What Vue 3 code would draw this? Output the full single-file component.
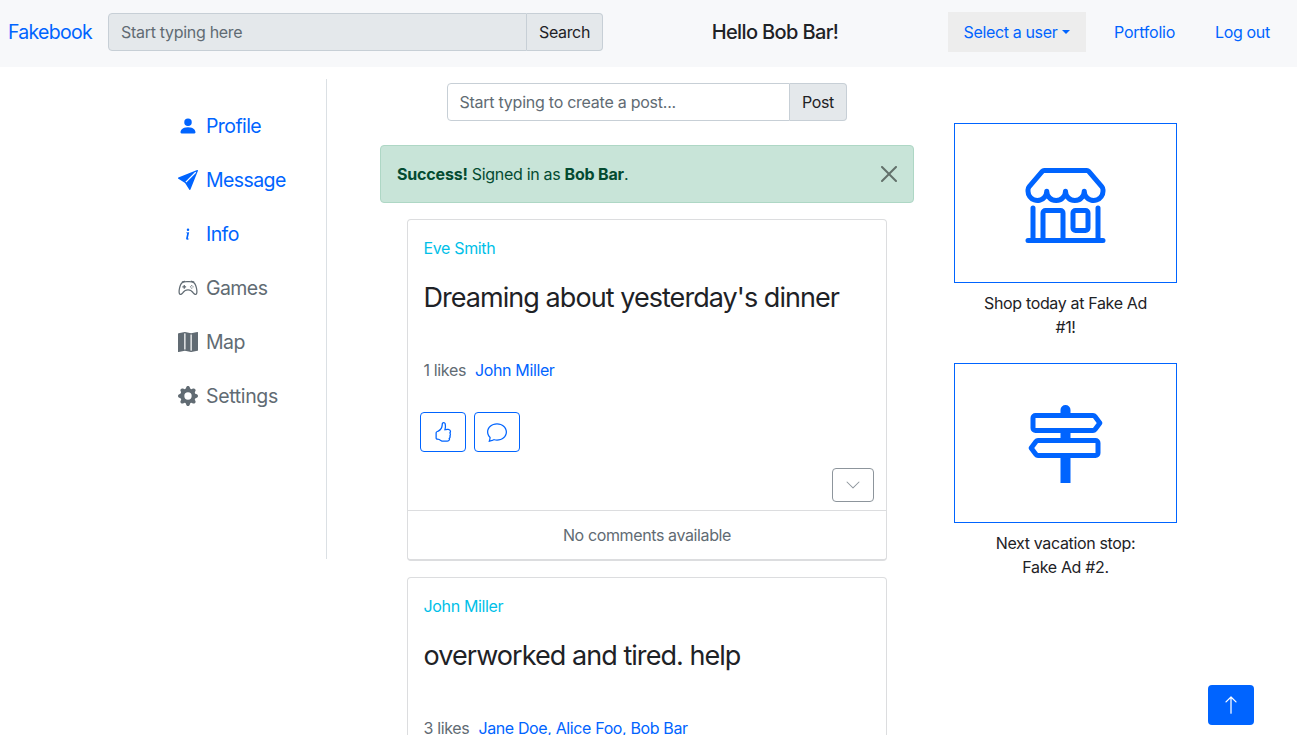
<script setup>
const icons = {
  person: 'M3 14s-1 0-1-1 1-4 6-4 6 3 6 4-1 1-1 1zm5-6a3 3 0 1 0 0-6 3 3 0 0 0 0 6',
  send: 'M15.964.686a.5.5 0 0 0-.65-.65L.767 5.855H.766l-.452.18a.5.5 0 0 0-.082.887l.41.26.001.002 4.995 3.178 3.178 4.995.002.002.26.41a.5.5 0 0 0 .886-.083zm-1.833 1.89L6.637 10.07l-.215-.338a.5.5 0 0 0-.154-.154l-.338-.215 7.494-7.494 1.178-.471z',
  info: 'm8.93 6.588-2.29.287-.082.38.45.083c.294.07.352.176.288.469l-.738 3.468c-.194.897.105 1.319.808 1.319.545 0 1.178-.252 1.465-.598l.088-.416c-.2.176-.492.246-.686.246-.275 0-.375-.193-.304-.533zM9 4.5a1 1 0 1 1-2 0 1 1 0 0 1 2 0',
  controller: 'M11.5 6.027a.5.5 0 1 1-1 0 .5.5 0 0 1 1 0m-1.5 1.5a.5.5 0 1 0 0-1 .5.5 0 0 0 0 1m2.5-.5a.5.5 0 1 1-1 0 .5.5 0 0 1 1 0m-1.5 1.5a.5.5 0 1 0 0-1 .5.5 0 0 0 0 1m-6.5-3h1v1h1v1h-1v1h-1v-1h-1v-1h1z M3.051 3.26a.5.5 0 0 1 .354-.613l1.932-.518a.5.5 0 0 1 .62.39c.655-.079 1.35-.117 2.043-.117.72 0 1.443.041 2.12.126a.5.5 0 0 1 .622-.399l1.932.518a.5.5 0 0 1 .306.729q.211.136.373.297c.408.408.78 1.05 1.095 1.772.32.733.599 1.591.805 2.466s.34 1.78.364 2.606c.024.816-.059 1.602-.328 2.21a1.42 1.42 0 0 1-1.445.83c-.636-.067-1.115-.394-1.513-.773-.245-.232-.496-.526-.739-.808-.126-.148-.25-.292-.368-.423-.728-.804-1.597-1.527-3.224-1.527s-2.496.723-3.224 1.527c-.119.131-.242.275-.368.423-.243.282-.494.575-.739.808-.398.38-.877.706-1.513.773a1.42 1.42 0 0 1-1.445-.83c-.27-.608-.352-1.395-.329-2.21.024-.826.16-1.73.365-2.606.206-.875.486-1.733.805-2.466.315-.722.687-1.364 1.094-1.772a2.3 2.3 0 0 1 .433-.335l-.028-.079zm2.036.412c-.877.185-1.469.443-1.733.708-.276.276-.587.783-.885 1.465a14 14 0 0 0-.748 2.295 12.4 12.4 0 0 0-.339 2.406c-.022.755.062 1.368.243 1.776a.42.42 0 0 0 .426.24c.327-.034.61-.199.929-.502.212-.202.4-.423.615-.674.133-.156.276-.323.44-.504C4.861 9.969 5.978 9.027 8 9.027s3.139.942 3.965 1.855c.164.181.307.348.44.504.214.251.403.472.615.674.318.303.601.468.929.503a.42.42 0 0 0 .426-.241c.18-.408.265-1.02.243-1.776a12.4 12.4 0 0 0-.339-2.406 14 14 0 0 0-.748-2.295c-.298-.682-.61-1.19-.885-1.465-.264-.265-.856-.523-1.733-.708-.85-.179-1.877-.27-2.913-.27s-2.063.091-2.913.27',
  map: 'M16 .5a.5.5 0 0 0-.598-.49L10.5.99 5.598.01a.5.5 0 0 0-.196 0l-5 1A.5.5 0 0 0 0 1.5v14a.5.5 0 0 0 .598.49l4.902-.98 4.902.98a.5.5 0 0 0 .196 0l5-1A.5.5 0 0 0 16 14.5zM5 14.09V1.11l.5-.1.5.1v12.98l-.402-.08a.5.5 0 0 0-.196 0zm5 .8V1.91l.402.08a.5.5 0 0 0 .196 0L11 1.91v12.98l-.5.1z',
  gear: 'M9.405 1.05c-.413-1.4-2.397-1.4-2.81 0l-.1.34a1.464 1.464 0 0 1-2.105.872l-.31-.17c-1.283-.698-2.686.705-1.987 1.987l.169.311c.446.82.023 1.841-.872 2.105l-.34.1c-1.4.413-1.4 2.397 0 2.81l.34.1a1.464 1.464 0 0 1 .872 2.105l-.17.31c-.698 1.283.705 2.686 1.987 1.987l.311-.169a1.464 1.464 0 0 1 2.105.872l.1.34c.413 1.4 2.397 1.4 2.81 0l.1-.34a1.464 1.464 0 0 1 2.105-.872l.31.17c1.283.698 2.686-.705 1.987-1.987l-.169-.311a1.464 1.464 0 0 1 .872-2.105l.34-.1c1.4-.413 1.4-2.397 0-2.81l-.34-.1a1.464 1.464 0 0 1-.872-2.105l.17-.31c.698-1.283-.705-2.686-1.987-1.987l-.311.169a1.464 1.464 0 0 1-2.105-.872zM8 10.93a2.929 2.929 0 1 1 0-5.86 2.929 2.929 0 0 1 0 5.858z',
  thumb: 'M8.864.046C7.908-.193 7.02.53 6.956 1.466c-.072 1.051-.23 2.016-.428 2.59-.125.36-.479 1.013-1.04 1.639-.557.623-1.282 1.178-2.131 1.41C2.685 7.288 2 7.87 2 8.72v4.001c0 .845.682 1.464 1.448 1.545 1.07.114 1.564.415 2.068.723l.048.03c.272.165.578.348.97.484.397.136.861.217 1.466.217h3.5c.937 0 1.599-.477 1.934-1.064a1.86 1.86 0 0 0 .254-.912c0-.152-.023-.312-.077-.464.201-.263.38-.578.488-.901.11-.33.172-.762.004-1.149.069-.13.12-.269.159-.403.077-.27.113-.568.113-.857 0-.288-.036-.585-.113-.856a2 2 0 0 0-.138-.362 1.9 1.9 0 0 0 .234-1.734c-.206-.592-.682-1.1-1.2-1.272-.847-.282-1.803-.276-2.516-.211a10 10 0 0 0-.443.05 9.4 9.4 0 0 0-.062-4.509A1.38 1.38 0 0 0 9.125.111zM11.5 14.721H8c-.51 0-.863-.069-1.14-.164-.281-.097-.506-.228-.776-.393l-.04-.024c-.555-.339-1.198-.731-2.49-.868-.333-.036-.554-.29-.554-.55V8.72c0-.254.226-.543.62-.65 1.095-.3 1.977-.996 2.614-1.708.635-.71 1.064-1.475 1.238-1.978.243-.7.407-1.768.482-2.85.025-.362.36-.594.667-.518l.262.066c.16.04.258.143.288.255a8.34 8.34 0 0 1-.145 4.725.5.5 0 0 0 .595.644l.003-.001.014-.003.058-.014a9 9 0 0 1 1.036-.157c.663-.06 1.457-.054 2.11.164.175.058.45.3.57.65.107.308.087.67-.266 1.022l-.353.353.353.354c.043.043.105.141.154.315.048.167.075.37.075.581 0 .212-.027.414-.075.582-.05.174-.111.272-.154.315l-.353.353.353.354c.047.047.109.177.005.488a2.2 2.2 0 0 1-.505.805l-.353.353.353.354c.006.005.041.05.041.17a.9.9 0 0 1-.121.416c-.165.288-.503.56-1.066.56z',
  chat: 'M2.678 11.894a1 1 0 0 1 .287.801 11 11 0 0 1-.398 2c1.395-.323 2.247-.697 2.634-.893a1 1 0 0 1 .71-.074A8 8 0 0 0 8 14c3.996 0 7-2.807 7-6s-3.004-6-7-6-7 2.808-7 6c0 1.468.617 2.83 1.678 3.894m-.493 3.905a22 22 0 0 1-.713.129c-.2.032-.352-.176-.273-.362a10 10 0 0 0 .244-.637l.003-.01c.248-.72.45-1.548.524-2.319C.743 11.37 0 9.76 0 8c0-3.866 3.582-7 8-7s8 3.134 8 7-3.582 7-8 7a9 9 0 0 1-2.347-.306c-.52.263-1.639.742-3.468 1.105',
  chevron: 'M1.646 4.646a.5.5 0 0 1 .708 0L8 10.293l5.646-5.647a.5.5 0 0 1 .708.708l-6 6a.5.5 0 0 1-.708 0l-6-6a.5.5 0 0 1 0-.708',
  arrowUp: 'M8 15a.5.5 0 0 0 .5-.5V2.707l3.146 3.147a.5.5 0 0 0 .708-.708l-4-4a.5.5 0 0 0-.708 0l-4 4a.5.5 0 1 0 .708.708L7.5 2.707V14.5a.5.5 0 0 0 .5.5',
  close: 'M.293.293a1 1 0 0 1 1.414 0L8 6.586 14.293.293a1 1 0 1 1 1.414 1.414L9.414 8l6.293 6.293a1 1 0 0 1-1.414 1.414L8 9.414l-6.293 6.293a1 1 0 0 1-1.414-1.414L6.586 8 .293 1.707a1 1 0 0 1 0-1.414z',
  shop: 'M2.97 1.35A1 1 0 0 1 3.73 1h8.54a1 1 0 0 1 .76.35l2.609 3.044A1.5 1.5 0 0 1 16 5.37v.255a2.375 2.375 0 0 1-4.25 1.458A2.371 2.371 0 0 1 9.875 8 2.37 2.37 0 0 1 8 7.083 2.37 2.37 0 0 1 6.125 8a2.37 2.37 0 0 1-1.875-.917A2.375 2.375 0 0 1 0 5.625V5.37a1.5 1.5 0 0 1 .361-.976zm1.78 4.275a1.375 1.375 0 0 0 2.75 0 .5.5 0 0 1 1 0 1.375 1.375 0 0 0 2.75 0 .5.5 0 0 1 1 0 1.375 1.375 0 1 0 2.75 0V5.37a.5.5 0 0 0-.12-.325L12.27 2H3.73L1.12 5.045A.5.5 0 0 0 1 5.37v.255a1.375 1.375 0 0 0 2.75 0 .5.5 0 0 1 1 0M1.5 8.5A.5.5 0 0 1 2 9v6h1v-5a1 1 0 0 1 1-1h3a1 1 0 0 1 1 1v5h6V9a.5.5 0 0 1 1 0v6h.5a.5.5 0 0 1 0 1H.5a.5.5 0 0 1 0-1H1V9a.5.5 0 0 1 .5-.5M4 15h3v-5H4zm5-5a1 1 0 0 1 1-1h2a1 1 0 0 1 1 1v3a1 1 0 0 1-1 1h-2a1 1 0 0 1-1-1zm3 0h-2v3h2z',
  signpost: 'M7 1.414V2H2a1 1 0 0 0-1 1v2a1 1 0 0 0 1 1h5v1H2.5a1 1 0 0 0-.8.4L.725 8.7a.5.5 0 0 0 0 .6l.975 1.3a1 1 0 0 0 .8.4H7v5h2v-5h5a1 1 0 0 0 1-1V8a1 1 0 0 0-1-1H9V6h4.5a1 1 0 0 0 .8-.4l.975-1.3a.5.5 0 0 0 0-.6L14.3 2.4a1 1 0 0 0-.8-.4H9v-.586a1 1 0 0 0-2 0M13.5 3l.75 1-.75 1H2V3zm.5 5v2H2.5l-.75-1 .75-1z'
}

const menu = [
  { icon: 'person', label: 'Profile', active: true },
  { icon: 'send', label: 'Message', active: true },
  { icon: 'info', label: 'Info', active: true },
  { icon: 'controller', label: 'Games', active: false },
  { icon: 'map', label: 'Map', active: false },
  { icon: 'gear', label: 'Settings', active: false }
]

const posts = [
  { author: 'Eve Smith', text: "Dreaming about yesterday's dinner", likes: 1, likedBy: 'John Miller' },
  { author: 'John Miller', text: 'overworked and tired. help', likes: 3, likedBy: 'Jane Doe, Alice Foo, Bob Bar' }
]

const ads = [
  { icon: 'shop', lines: ['Shop today at Fake Ad', '#1!'] },
  { icon: 'signpost', lines: ['Next vacation stop:', 'Fake Ad #2.'] }
]
</script>

<template>
  <div class="page">
    <header class="navbar">
      <a class="brand">Fakebook</a>
      <div class="group search">
        <div class="field"><span>Start typing here</span></div>
        <button class="addon search-btn"><span>Search</span></button>
      </div>
      <div class="hello"><span>Hello Bob Bar!</span></div>
      <nav class="links">
        <a class="dropdown"><span>Select a user</span><i class="caret"></i></a>
        <a class="portfolio">Portfolio</a>
        <a class="logout">Log out</a>
      </nav>
    </header>

    <div class="columns">
      <aside class="sidebar">
        <a v-for="m in menu" :key="m.label" class="item" :class="{ active: m.active }">
          <svg viewBox="0 0 16 16" class="i20"><path fill-rule="evenodd" :d="icons[m.icon]" /></svg>
          <span>{{ m.label }}</span>
        </a>
      </aside>

      <main class="feed">
        <div class="group create">
          <div class="field"><span>Start typing to create a post...</span></div>
          <button class="addon post-btn"><span>Post</span></button>
        </div>

        <div class="alert">
          <p><strong>Success!</strong> Signed in as <strong>Bob Bar</strong>.</p>
          <svg viewBox="0 0 16 16" class="close"><path :d="icons.close" /></svg>
        </div>

        <article v-for="p in posts" :key="p.author" class="card">
          <div class="body">
            <a class="author">{{ p.author }}</a>
            <h3>{{ p.text }}</h3>
            <div class="likes">
              <span>{{ p.likes }} likes</span><a>{{ p.likedBy }}</a>
            </div>
            <div class="actions">
              <button><svg viewBox="0 0 16 16" class="i20"><path fill-rule="evenodd" :d="icons.thumb" /></svg></button>
              <button><svg viewBox="0 0 16 16" class="i20"><path fill-rule="evenodd" :d="icons.chat" /></svg></button>
            </div>
            <div class="more">
              <button><svg viewBox="0 0 16 16" class="i16"><path :d="icons.chevron" /></svg></button>
            </div>
          </div>
          <footer><span>No comments available</span></footer>
        </article>
      </main>

      <aside class="ads">
        <figure v-for="ad in ads" :key="ad.icon">
          <div class="picture"><svg viewBox="-0.1 0 16.2 16"><path fill-rule="evenodd" :d="icons[ad.icon]" /></svg></div>
          <figcaption><span v-for="l in ad.lines" :key="l">{{ l }}</span></figcaption>
        </figure>
      </aside>
    </div>

    <button class="to-top"><svg viewBox="0 0 16 16" class="i20"><path :d="icons.arrowUp" /></svg></button>
  </div>
</template>

<style>
body {
  margin: 0;
  overflow: hidden;
}
</style>

<style scoped>
.page {
  --blue: #0064ff;
  --gray: #616b73;
  --line: #c7cfd6;
  box-sizing: border-box;
  height: 735px;
  overflow: hidden;
  background: #fff;
  color: #1e2226;
  font: 16px/24px Inter, "Liberation Sans", sans-serif;
  letter-spacing: -0.35px;
  white-space: nowrap;
}
.page * { box-sizing: border-box; }
svg { display: block; fill: currentColor; flex: none; }
button {
  font: inherit;
  letter-spacing: inherit;
  color: inherit;
  margin: 0;
  padding: 0;
}
.i20 { width: 20px; height: 20px; }
.i16 { width: 16px; height: 16px; }

.navbar {
  display: flex;
  align-items: center;
  height: 67px;
  padding: 0 15px 3px 8px;
  background: #f7f8fa;
}
.brand {
  width: 100px;
  font-size: 19.5px;
  line-height: 30px;
  letter-spacing: -0.72px;
  color: var(--blue);
}
.group { display: flex; height: 38px; }
.field {
  flex: 1;
  display: flex;
  align-items: center;
  padding-left: 12px;
  border: 1px solid var(--line);
  border-radius: 4px 0 0 4px;
  color: var(--gray);
  letter-spacing: -0.25px;
}
.addon {
  border: 1px solid var(--line);
  border-left: 0;
  border-radius: 0 4px 4px 0;
  background: #e4e8eb;
}
.search { width: 495px; }
.search .field { background: #e4e8eb; letter-spacing: -0.3px; }
.search-btn { width: 76px; }
.create .field { padding-left: 11.5px; }
.hello {
  width: 345px;
  display: flex;
  justify-content: center;
  padding-right: 1px;
  font-size: 20px;
  font-weight: 500;
  letter-spacing: -0.62px;
}
.links { display: flex; align-items: center; height: 40px; color: var(--blue); }
.dropdown {
  display: flex;
  align-items: center;
  width: 138px;
  height: 40px;
  padding-left: 15.5px;
  background: #ededed;
}
.caret {
  margin-left: 4.5px;
  border-top: 4.8px solid;
  border-left: 4.8px solid transparent;
  border-right: 4.8px solid transparent;
}
.portfolio { margin-left: 28px; width: 101px; letter-spacing: -0.25px; }

.columns { display: grid; grid-template-columns: 327px 640px 1fr; }
.sidebar {
  height: 480px;
  margin-top: 12px;
  padding: 20px 0 0 178px;
  border-right: 1px solid #dbe0e4;
}
.item {
  display: flex;
  align-items: center;
  gap: 8px;
  height: 54px;
  font-size: 19.5px;
  letter-spacing: -0.58px;
  color: var(--gray);
}
.item:last-child { letter-spacing: -0.35px; }
.item.active { color: var(--blue); }

.feed {
  display: flex;
  flex-direction: column;
  align-items: center;
  padding-top: 16px;
}
.create { width: 400px; margin-bottom: 24px; }
.post-btn { width: 57px; }
.alert {
  display: flex;
  justify-content: space-between;
  align-items: center;
  width: 534px;
  height: 58px;
  margin-bottom: 16px;
  padding: 0 16px;
  border: 1px solid #aed7c5;
  border-radius: 4px;
  background: #c8e4d8;
  color: #044b31;
  letter-spacing: -0.32px;
}
.alert p { margin: 0; }
.alert strong { letter-spacing: -0.18px; }
.close { width: 16px; height: 16px; fill: #000; opacity: .5; }

.card {
  width: 480px;
  margin-bottom: 16px;
  border: 1px solid #dcdddf;
  border-bottom: 2px solid #dcdddf;
  border-radius: 4px;
}
.body { display: flex; flex-direction: column; height: 290px; padding: 16px 12px 8px 15.5px; }
.author { color: #00bfe8; }
h3 {
  margin: 21px 0 0;
  font-size: 27px;
  line-height: 34px;
  font-weight: 400;
  letter-spacing: -0.95px;
}
.likes { display: flex; gap: 9px; margin-top: 43px; color: var(--gray); }
.likes a { color: var(--blue); letter-spacing: -0.37px; }
.actions { display: flex; gap: 8px; margin: 30px 0 0 -3.5px; }
.actions button {
  display: grid;
  place-items: center;
  width: 46px;
  height: 40px;
  border: 1px solid var(--blue);
  border-radius: 4px;
  background: #fff;
  color: var(--blue);
}
.more { display: flex; justify-content: flex-end; margin-top: 16px; }
.more button {
  display: grid;
  place-items: center;
  width: 42px;
  height: 34px;
  border: 1px solid #8d959c;
  border-radius: 4px;
  background: #fff;
  color: #8d959c;
}
footer {
  display: flex;
  justify-content: center;
  align-items: center;
  height: 49px;
  border-top: 1px solid #dcdddf;
  color: var(--gray);
  letter-spacing: -0.38px;
}

.ads { width: 223px; margin-left: -13px; padding-top: 56px; }
figure { margin: 0; height: 240px; }
.picture {
  display: grid;
  place-items: center;
  height: 160px;
  border: 1px solid var(--blue);
  color: var(--blue);
}
.picture svg { width: 81px; height: 80px; }
figcaption { display: flex; flex-direction: column; align-items: center; margin-top: 8px; }

.to-top {
  position: fixed;
  right: 43px;
  bottom: 10px;
  display: grid;
  place-items: center;
  width: 46px;
  height: 40px;
  border: 0;
  border-radius: 4px;
  background: var(--blue);
  color: #fff;
}
</style>
